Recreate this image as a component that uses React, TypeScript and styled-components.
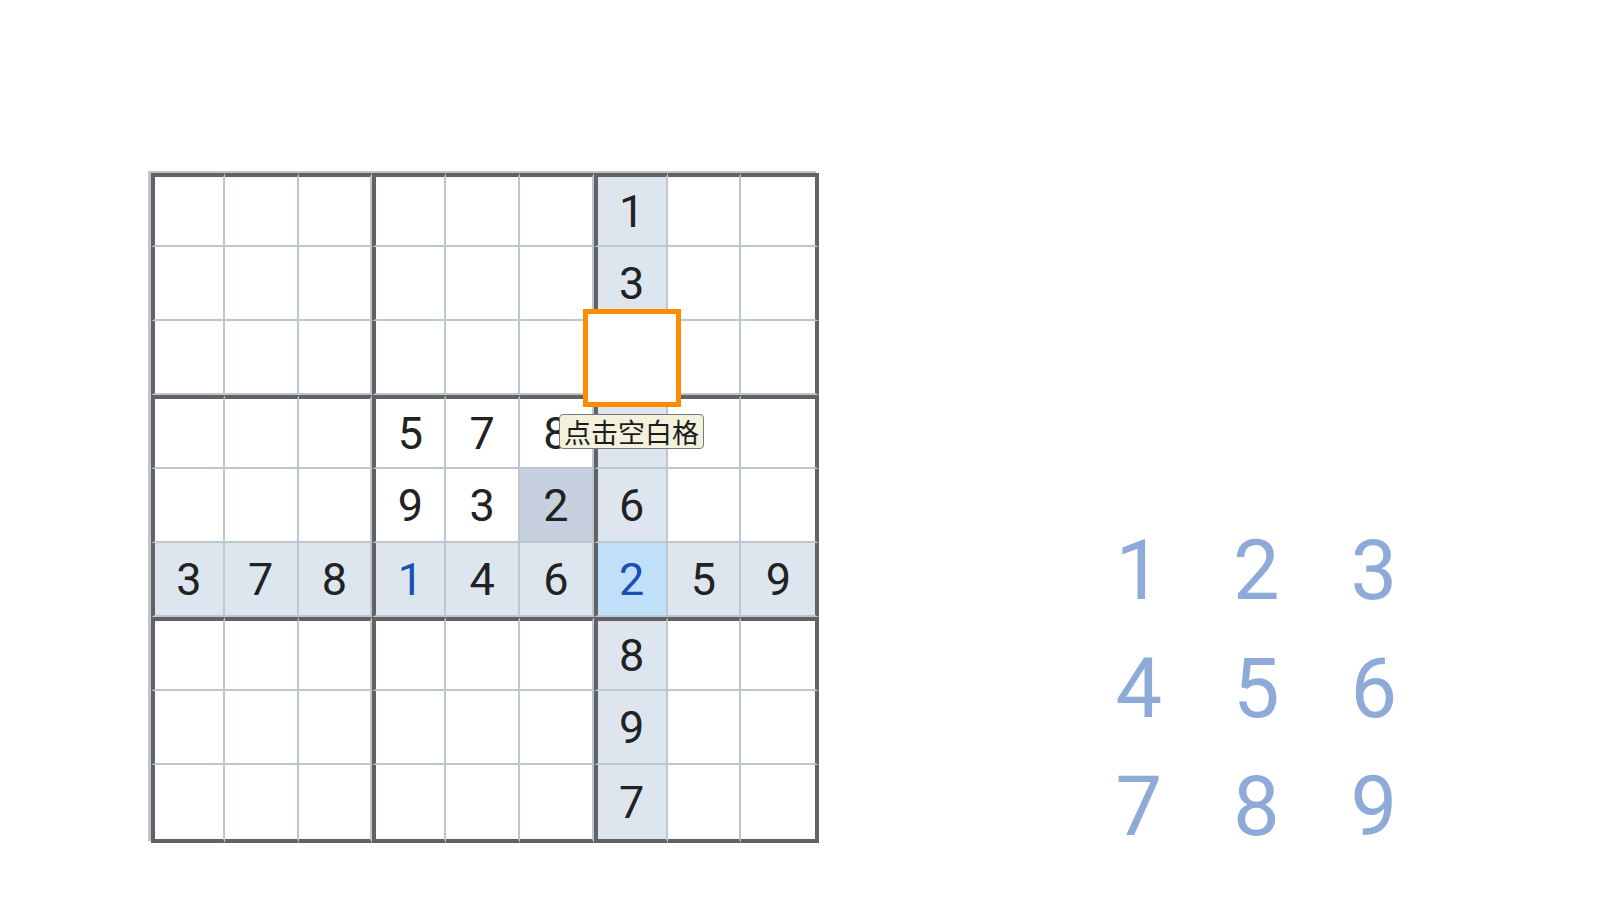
import React from "react";
import styled, { createGlobalStyle, css } from "styled-components";

const DARK = "#636166";
const LIGHT = "#bcc7ce";

const GlobalStyle = createGlobalStyle`
  html, body {
    margin: 0;
    padding: 0;
    background: #ffffff;
    font-family: Roboto, "Noto Sans", "Liberation Sans", sans-serif;
  }
`;

const Page = styled.div`
  box-sizing: border-box;
  width: 1600px;
  height: 900px;
  display: flex;
  align-items: flex-start;
  gap: 260.8px;
  padding: 173px 0 0 151px;
  overflow: hidden;
`;

const Board = styled.div`
  position: relative;
  display: grid;
  grid-template-columns: repeat(8, 73.8px) 77.8px;
  grid-template-rows: repeat(8, 74px) 78px;
  box-shadow: -3px -2px 0 ${LIGHT};
`;

type Tone = "plain" | "line" | "same" | "selected";

const toneBg: Record<Tone, string> = {
  plain: "#ffffff",
  line: "#dde6ef",
  same: "#c6d0de",
  selected: "#bfe0f8",
};

const Cell = styled.div<{ $row: number; $col: number; $tone: Tone; $blue: boolean }>`
  box-sizing: border-box;
  display: flex;
  align-items: center;
  justify-content: center;
  font-family: Roboto, "Noto Sans", sans-serif;
  font-size: 45px;
  color: ${(p) => (p.$blue ? "#1a4fb3" : "#222222")};
  background: ${(p) => toneBg[p.$tone]};
  border-right: ${(p) => (p.$col === 8 ? `4px solid ${DARK}` : `2px solid ${LIGHT}`)};
  border-bottom: ${(p) => (p.$row === 8 ? `4px solid ${DARK}` : `2px solid ${LIGHT}`)};
  ${(p) =>
    p.$col % 3 === 0 &&
    css`
      border-left: 4px solid ${DARK};
    `}
  ${(p) =>
    p.$row % 3 === 0 &&
    css`
      border-top: 4px solid ${DARK};
    `}
`;

const Focus = styled.div`
  position: absolute;
  left: 432px;
  top: 136px;
  width: 98px;
  height: 98px;
  box-sizing: border-box;
  border: 5px solid #ff8c00;
  background: #ffffff;
`;

const Tip = styled.div`
  position: absolute;
  left: 408px;
  top: 241px;
  height: 35px;
  box-sizing: border-box;
  padding: 1px 4px 0;
  border: 1px solid #7a7a7a;
  border-radius: 4px;
  background: #f1f1dc;
  color: #1c1c1c;
  font-family: "Noto Sans CJK SC", "Noto Sans", sans-serif;
  font-size: 27px;
  line-height: 32px;
  white-space: nowrap;
`;

const Pad = styled.div`
  display: grid;
  grid-template-columns: repeat(3, 117.5px);
  grid-auto-rows: 118px;
  margin-top: 338px;
`;

const Key = styled.div`
  display: flex;
  align-items: center;
  justify-content: center;
  font-family: Roboto, "Noto Sans", sans-serif;
  font-size: 83px;
  color: #8eaad8;
  cursor: pointer;
`;

const grid: (number | null)[][] = [
  [null, null, null, null, null, null, 1, null, null],
  [null, null, null, null, null, null, 3, null, null],
  [null, null, null, null, null, null, null, null, null],
  [null, null, null, 5, 7, 8, null, null, null],
  [null, null, null, 9, 3, 2, 6, null, null],
  [3, 7, 8, 1, 4, 6, 2, 5, 9],
  [null, null, null, null, null, null, 8, null, null],
  [null, null, null, null, null, null, 9, null, null],
  [null, null, null, null, null, null, 7, null, null],
];

const SEL_ROW = 5;
const SEL_COL = 6;
const blueCells = new Set(["5-3", "5-6"]);

export default function App() {
  const selValue = grid[SEL_ROW][SEL_COL];
  return (
    <>
      <GlobalStyle />
      <Page>
        <Board>
          {grid.map((row, r) =>
            row.map((v, c) => {
              let tone: Tone = "plain";
              if (r === SEL_ROW && c === SEL_COL) tone = "selected";
              else if (r === SEL_ROW || c === SEL_COL) tone = "line";
              else if (v !== null && v === selValue) tone = "same";
              return (
                <Cell
                  key={`${r}-${c}`}
                  $row={r}
                  $col={c}
                  $tone={tone}
                  $blue={blueCells.has(`${r}-${c}`)}
                >
                  {v ?? ""}
                </Cell>
              );
            })
          )}
          <Focus />
          <Tip>点击空白格</Tip>
        </Board>
        <Pad>
          {[1, 2, 3, 4, 5, 6, 7, 8, 9].map((n) => (
            <Key key={n}>{n}</Key>
          ))}
        </Pad>
      </Page>
    </>
  );
}
